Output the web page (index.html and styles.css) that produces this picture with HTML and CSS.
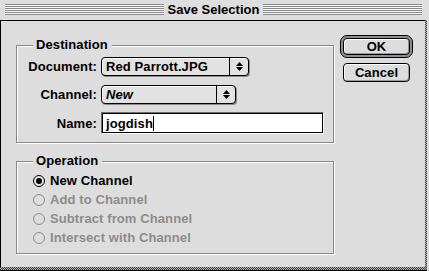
FILE: index.html
```html
<!DOCTYPE html>
<html>
<head>
<meta charset="utf-8">
<title>Save Selection</title>
<link rel="stylesheet" href="styles.css">
</head>
<body>
<div class="window">
  <div class="titlebar">
    <div class="stripes"></div>
    <div class="title">Save Selection</div>
    <div class="stripes"></div>
  </div>
  <div class="frame">
  <div class="content">
    <div class="main">
      <div class="group dest">
        <span class="legend">Destination</span>
        <div class="row">
          <span class="lbl">Document:</span>
          <div class="popup doc">
            <span class="ptext">Red Parrott.JPG</span>
            <span class="parrow"><svg width="7" height="9" viewBox="0 0 7 9"><polygon points="3.5,0 7,4 0,4"/><polygon points="0,5 7,5 3.5,9"/></svg></span>
          </div>
        </div>
        <div class="row">
          <span class="lbl">Channel:</span>
          <div class="popup chan">
            <span class="ptext italic">New</span>
            <span class="parrow"><svg width="7" height="9" viewBox="0 0 7 9"><polygon points="3.5,0 7,4 0,4"/><polygon points="0,5 7,5 3.5,9"/></svg></span>
          </div>
        </div>
        <div class="row namerow">
          <span class="lbl">Name:</span>
          <div class="field"><div class="field-inner"><span class="val">jogdish</span><span class="caret"></span></div></div>
        </div>
      </div>
      <div class="group op">
        <span class="legend">Operation</span>
        <div class="radio on"><span class="rb"></span>New Channel</div>
        <div class="radio off"><span class="rb"></span>Add to Channel</div>
        <div class="radio off"><span class="rb"></span>Subtract from Channel</div>
        <div class="radio off"><span class="rb"></span>Intersect with Channel</div>
      </div>
    </div>
    <div class="buttons">
      <div class="defring"><div class="btn ok">OK</div></div>
      <div class="btn cancel">Cancel</div>
    </div>
  </div>
  </div>
</div>
</body>
</html>
```

FILE: styles.css
```css
html, body {
  margin: 0;
  padding: 0;
  background: #dddddd;
}
body {
  font: bold 13px "Liberation Sans", Arial, sans-serif;
  letter-spacing: 0.1px;
  color: #000;
}
.window {
  width: 429px;
  height: 271px;
  display: flex;
  flex-direction: column;
  background: #dddddd;
}
.titlebar {
  height: 20px;
  flex: none;
  display: flex;
  align-items: flex-start;
  gap: 4px;
  padding: 0 7px 0 5px;
  box-sizing: border-box;
  background: #dedede;
}
.stripes {
  flex: 1;
  height: 11px;
  margin-top: 4px;
  background: repeating-linear-gradient(#8a8a8a 0 1px, #f6f6f6 1px 2px);
}
.title {
  line-height: 19px;
  letter-spacing: 0;
}
.frame {
  flex: 1;
  display: flex;
  margin-right: 2px;
  border-bottom: 1px solid #000;
  padding: 0 2px 3px 0;
  background: repeating-conic-gradient(#3c3c3c 0 25%, #b4b4b4 0 50%) 0 0 / 2px 2px;
}
.content {
  flex: 1;
  display: flex;
  border-top: 1px solid #000;
  border-left: 1px solid #000;
  background: #dddddd;
}
.main {
  width: 318px;
  padding: 24px 0 0 15px;
}
.group {
  position: relative;
  border: 1px solid #878787;
  box-shadow: 1px 1px 0 #fff, inset 1px 1px 0 #fff;
  box-sizing: border-box;
}
.legend {
  position: absolute;
  top: -9px;
  left: 16px;
  padding: 0 4px 0 3px;
  background: #dddddd;
  line-height: 16px;
}
.dest {
  height: 98px;
  padding-top: 11px;
}
.row {
  display: flex;
  align-items: center;
  height: 19px;
  margin-bottom: 9px;
}
.namerow {
  height: 22px;
  margin-top: -1px;
  margin-bottom: 0;
}
.lbl {
  width: 80px;
  margin-right: 4px;
  text-align: right;
}
.popup {
  display: flex;
  height: 19px;
  box-sizing: border-box;
  border: 1px solid #000;
  border-radius: 4px;
  background: #e2e2e2;
  box-shadow: 1px 1px 0 #8a8a8a, inset 1px 1px 0 #fff;
}
.doc { width: 148px; }
.chan { width: 135px; }
.ptext {
  flex: 1;
  padding-left: 4px;
  line-height: 17px;
}
.italic {
  font-style: italic;
}
.parrow {
  width: 18px;
  border-left: 1px solid #000;
  display: flex;
  align-items: center;
  justify-content: center;
}
.parrow svg {
  display: block;
  fill: #000;
}
.field {
  width: 223px;
  height: 22px;
  box-sizing: border-box;
  border: 1px solid;
  border-color: #6e6e6e #fff #fff #6e6e6e;
}
.field-inner {
  height: 100%;
  box-sizing: border-box;
  border: 1px solid #000;
  background: #fff;
  display: flex;
  align-items: center;
  padding-left: 3px;
}
.caret {
  width: 1px;
  height: 15px;
  background: #000;
}
.op {
  margin-top: 18px;
  height: 93px;
  padding: 9px 0 0 16px;
}
.radio {
  display: flex;
  align-items: center;
  gap: 5px;
  height: 19px;
}
.rb {
  width: 12px;
  height: 12px;
  box-sizing: border-box;
  border-radius: 50%;
  border: 1px solid #000;
  background: #e6e6e6;
  display: flex;
  align-items: center;
  justify-content: center;
}
.on .rb::after {
  content: "";
  width: 6px;
  height: 6px;
  border-radius: 50%;
  background: #000;
}
.off {
  color: #8c8c8c;
}
.off .rb {
  border-color: #8c8c8c;
  background: #dddddd;
}
.buttons {
  display: flex;
  flex-direction: column;
  align-items: center;
  width: 73px;
  margin: 14px 0 0 6px;
  gap: 5px;
}
.defring {
  width: 73px;
  height: 23px;
  box-sizing: border-box;
  border: 1px solid #000;
  border-radius: 7px;
  background: #8e8e8e;
  padding: 2px;
}
.btn {
  box-sizing: border-box;
  border: 1px solid #000;
  border-radius: 4px;
  background: #dddddd;
  box-shadow: inset 1px 1px 0 #fff, inset -1px -1px 0 #9a9a9a;
  text-align: center;
}
.ok {
  height: 17px;
  line-height: 15px;
}
.cancel {
  width: 67px;
  height: 19px;
  line-height: 17px;
}
```
